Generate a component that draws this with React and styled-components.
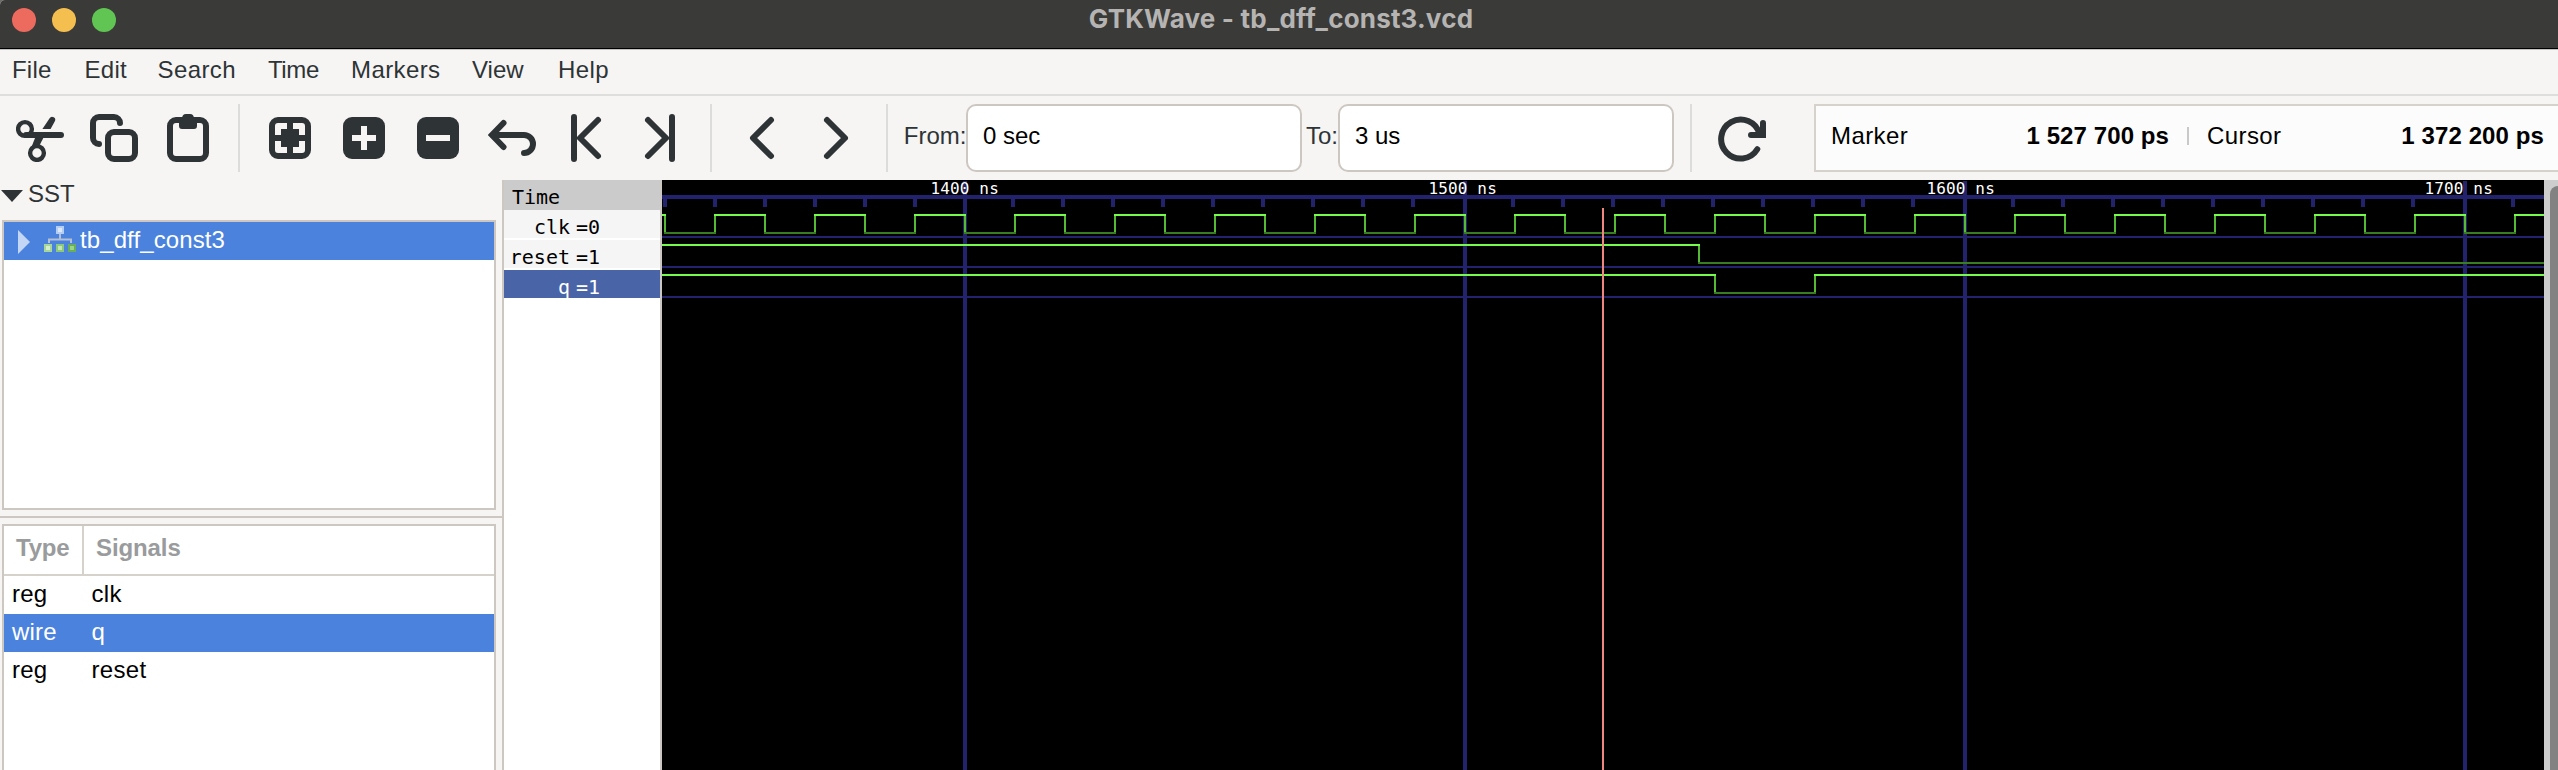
import React from "react";
import styled, { createGlobalStyle } from "styled-components";

const INK = "#2e3436";
const BG = "#f6f5f4";
const LINE = "#cdc7c2";
const SELECT = "#4a82dd";

const GlobalStyle = createGlobalStyle`
  * { box-sizing: border-box; }
  body { margin: 0; background: #6d6d6b; overflow: hidden; }
`;

const Window = styled.div`
  display: flex;
  flex-direction: column;
  width: 100%;
  height: 770px;
  overflow: hidden;
  border-top-left-radius: 5px;
  background: ${BG};
  color: ${INK};
  font: 24px/28px "Liberation Sans", Arial, sans-serif;
  white-space: pre;
`;

const TitleBar = styled.header`
  display: grid;
  grid-template-columns: 1fr auto 1fr;
  flex: none;
  height: 50px;
  padding-left: 12px;
  background: #3a3a38;
  border-bottom: 1px solid #c4c3c1;
  box-shadow: inset 0 -1px 0 #000;
`;

const Lights = styled.div`
  display: flex;
  gap: 16px;
  padding-top: 8px;
`;

const Light = styled.span`
  width: 24px;
  height: 24px;
  border-radius: 50%;
  background: ${(p) => p.$color};
`;

const Title = styled.h1`
  margin: 0;
  padding: 3px 8px 0 0;
  font: 700 26px/32px Inter, "Liberation Sans", sans-serif;
  letter-spacing: 0.18px;
  color: #b5b4b2;
`;

const MenuBar = styled.nav`
  display: flex;
  align-items: center;
  flex: none;
  height: 46px;
  padding: 0 0 4px 12px;
  border-bottom: 2px solid #dededc;
`;

const MenuItem = styled.span`
  width: ${(p) => p.$width}px;
  letter-spacing: ${(p) => p.$spacing}px;
`;

const Toolbar = styled.div`
  display: flex;
  flex: none;
  height: 84px;
  padding: 8px 0 8px 3px;
`;

const ToolButton = styled.div`
  display: flex;
  flex: none;
  width: 74px;
  padding: 10px 13px;
`;

const Divider = styled.div`
  flex: none;
  width: 2px;
  margin: 0 13px 0 ${(p) => p.$before || 13}px;
  background: #dcdcda;
`;

const FieldLabel = styled.label`
  display: flex;
  flex: none;
  align-items: center;
  width: ${(p) => p.$width}px;
  padding: 0 0 4px ${(p) => p.$indent}px;
`;

const Entry = styled.div`
  display: flex;
  flex: none;
  align-items: center;
  width: 336px;
  padding: 0 0 4px 15px;
  border: 2px solid ${LINE};
  border-radius: 10px;
  background: #fff;
  color: #000;
`;

const Readout = styled.div`
  display: flex;
  flex: 1;
  align-items: center;
  margin-left: 35px;
  padding: 0 0 4px 15px;
  border: 2px solid #d5d1cb;
  border-right: 0;
  background: #fcfcfc;
  color: #000;
`;

const ReadoutName = styled.span`
  letter-spacing: 0.4px;
`;

const ReadoutValue = styled.b`
  width: ${(p) => p.$width}px;
  text-align: right;
  letter-spacing: 0.1px;
`;

const ReadoutRule = styled.span`
  width: 2px;
  height: 18px;
  margin: 0 18px;
  background: #c9c9c9;
`;

const Body = styled.main`
  display: flex;
  flex: 1;
  min-height: 0;
`;

const SidePane = styled.aside`
  display: flex;
  flex-direction: column;
  flex: none;
  width: 504px;
  border-right: 2px solid ${LINE};
`;

const Expander = styled.div`
  display: flex;
  gap: 5px;
  height: 40px;
  padding-left: 1px;
`;

const ExpanderArrow = styled.svg`
  width: 22px;
  height: 12px;
  margin-top: 10px;
`;

const Frame = styled.section`
  display: flex;
  flex-direction: column;
  flex: ${(p) => (p.$height ? "none" : 1)};
  height: ${(p) => (p.$height ? `${p.$height}px` : "auto")};
  margin: 0 6px 0 2px;
  border: 2px solid ${LINE};
  border-bottom-width: ${(p) => (p.$height ? 2 : 0)}px;
  background: #fff;
`;

const PaneSplit = styled.div`
  height: 2px;
  margin: 6px 0;
  background: ${LINE};
`;

const TreeRow = styled.div`
  display: flex;
  align-items: center;
  height: 38px;
  padding-left: 14px;
  background: ${SELECT};
  color: #fff;
`;

const TreeArrow = styled.svg`
  width: 12px;
  height: 24px;
  margin-top: 2px;
`;

const TreeIcon = styled.svg`
  width: 32px;
  height: 26px;
  margin: 0 4px 4px 14px;
`;

const TreeName = styled.span`
  padding-bottom: 2px;
  letter-spacing: 0.1px;
`;

const TableHead = styled.div`
  display: flex;
  height: 50px;
  border-bottom: 2px solid #d5d1cb;
  color: #999b9c;
  font-weight: 700;
`;

const HeadCell = styled.div`
  display: flex;
  align-items: center;
  width: ${(p) => p.$width};
  padding: 0 0 4px 12px;
  border-right: ${(p) => (p.$rule ? "2px solid #d5d1cb" : "0")};
  letter-spacing: ${(p) => p.$spacing}px;
`;

const TableRow = styled.div`
  display: flex;
  align-items: center;
  height: 38px;
  padding: 0 0 2px 8px;
  background: ${(p) => (p.$active ? SELECT : "#fff")};
  color: ${(p) => (p.$active ? "#fff" : "#000")};
`;

const TypeCell = styled.span`
  width: 79.5px;
  letter-spacing: 0.2px;
`;

const SignalCell = styled.span`
  letter-spacing: 0.3px;
`;

const NamesPane = styled.section`
  flex: none;
  width: 158px;
  border-right: 2px solid ${LINE};
  background: #fff;
  color: #000;
  font: 20px/24px "DejaVu Sans Mono", monospace;
`;

const NamesHead = styled.div`
  height: 30px;
  padding: 5px 0 0 8px;
  background: #cbcbcb;
`;

const NameRow = styled.div`
  display: flex;
  gap: 5px;
  height: 28px;
  margin-bottom: 2px;
  padding-top: 5px;
  overflow: hidden;
  background: ${(p) => (p.$active ? "#4a64a8" : "#f5f5f5")};
  color: ${(p) => (p.$active ? "#fff" : "#000")};
`;

const SignalName = styled.span`
  width: 67px;
  padding-right: 1px;
  text-align: right;
`;

const WavePane = styled.section`
  flex: 1;
  min-width: 0;
  background: #000;
`;

const WaveCanvas = styled.svg`
  display: block;
  width: 1882px;
  height: 590px;
  shape-rendering: crispEdges;
  font: 16px "DejaVu Sans Mono", monospace;
`;

const ScrollTrack = styled.div`
  display: flex;
  flex: none;
  width: 14px;
  padding: 6px 0 0 6px;
  background: #cdcdcd;
`;

const ScrollThumb = styled.div`
  flex: 1;
  border-top-left-radius: 8px;
  background: #828282;
`;

const IconSvg = styled.svg`
  width: 48px;
  height: 48px;
  fill: none;
  stroke: ${INK};
  stroke-width: 6px;
  stroke-linecap: round;
`;

const glyphs = {
  cut: (
    <>
      <circle cx="9" cy="15" r="6.9" strokeWidth="4.4" />
      <circle cx="21" cy="39" r="6.9" strokeWidth="4.4" />
      <path d="M10 21H45" />
      <path d="M33.6 4.2a3 3 0 0 1 5.1 3.2L34.6 15H26.4Z" fill={INK} stroke="none" />
      <path d="M19.4 23H27.8L23 32.5L15.5 33Z" fill={INK} stroke="none" />
    </>
  ),
  copy: (
    <>
      <path d="M30 9a6 6 0 0 0-6-6H9a6 6 0 0 0-6 6V24a6 6 0 0 0 6 6" />
      <rect x="18" y="18" width="27" height="27" rx="6" />
    </>
  ),
  paste: (
    <>
      <rect x="6" y="6" width="36" height="39" rx="6" />
      <path
        d="M15 5H18Q18 0 22 0H26Q30 0 30 5H33V12Q33 15 30 15H18Q15 15 15 12Z"
        fill={INK}
        stroke="none"
      />
    </>
  ),
  fit: (
    <>
      <rect x="6" y="6" width="36" height="36" rx="6" />
      <path d="M24 6V42M6 24H42" />
      <rect x="15" y="15" width="18" height="18" fill={INK} stroke="none" />
    </>
  ),
  zoomIn: (
    <>
      <rect x="3" y="3" width="42" height="42" rx="9" fill={INK} stroke="none" />
      <path d="M12 21H21V12H27V21H36V27H27V36H21V27H12Z" fill={BG} stroke="none" />
    </>
  ),
  zoomOut: (
    <>
      <rect x="3" y="3" width="42" height="42" rx="9" fill={INK} stroke="none" />
      <rect x="12" y="21" width="24" height="6" fill={BG} stroke="none" />
    </>
  ),
  undo: (
    <>
      <path d="M15.5 9L4 21L15.5 33" />
      <path d="M5 21H36a9 9 0 0 1 0 18" />
    </>
  ),
  first: <path d="M12 3V45M36 6L18 24L36 42" strokeLinejoin="round" />,
  last: <path d="M36 3V45M12 6L30 24L12 42" strokeLinejoin="round" />,
  previous: <path d="M33 6L15 24L33 42" strokeLinejoin="round" />,
  next: <path d="M15 6L33 24L15 42" strokeLinejoin="round" />,
  reload: (
    <>
      <path d="M39.3 35.2A19.5 19.5 0 1 1 41.5 20" />
      <path d="M33 21H45V9" />
      <path d="M38 18L42 14V20Z" fill={INK} stroke="none" />
    </>
  ),
};

const ThinRingIcon = styled(IconSvg)`
  circle { stroke-width: 4.4px; }
`;

function Tool({ name }) {
  const Svg = name === "cut" ? ThinRingIcon : IconSvg;
  return (
    <ToolButton>
      <Svg viewBox="0 0 48 48">{glyphs[name]}</Svg>
    </ToolButton>
  );
}

const menus = [
  ["File", 72.5, 0.2],
  ["Edit", 73, 0.3],
  ["Search", 110.5, 0.4],
  ["Time", 83, -0.4],
  ["Markers", 121, 0.4],
  ["View", 86, 0],
  ["Help", 80, 0.4],
];

const signals = [
  ["reg", "clk", false],
  ["wire", "q", true],
  ["reg", "reset", false],
];

const traces = [
  ["clk", "0", false],
  ["reset", "1", false],
  ["q", "1", true],
];

/* The canvas shows 5 px per nanosecond, with 1400 ns at x = 303. */
const WIDTH = 1882;
const NAVY = "#22226f";
const xAt = (t) => 303 + (t - 1400) * 5;
const majors = [1400, 1500, 1600, 1700];
const ticks = Array.from({ length: 38 }, (_, i) => 1340 + i * 10).filter(
  (t) => t % 100 !== 0
);
const clockEdges = Array.from({ length: 38 }, (_, i) => xAt(1340 + i * 10));

function Trace({ top, start, edges }) {
  const points = [-2, ...edges, WIDTH + 2];
  let high = "";
  let low = "";
  let rise = "";
  for (let i = 0; i < points.length - 1; i += 1) {
    const isHigh = i % 2 === 0 ? start : !start;
    const y = isHigh ? top : top + 18;
    const segment = `M${points[i] - 1} ${y}H${points[i + 1] + 1}`;
    if (isHigh) high += segment;
    else low += segment;
    if (i > 0) rise += `M${points[i]} ${top + 1}V${top + 17}`;
  }
  return (
    <g fill="none" strokeWidth="2">
      <path d={low} stroke="#387d22" />
      <path d={rise} stroke="#55b936" />
      <path d={high} stroke="#75fb4c" />
    </g>
  );
}

function Waves() {
  return (
    <WaveCanvas viewBox="0 0 1882 590">
      <g fill={NAVY}>
        <rect x="0" y="15" width={WIDTH} height="4" />
        {majors.map((t) => (
          <rect key={t} x={xAt(t) - 2} y="1" width="4" height="589" />
        ))}
        {ticks.map((t) => (
          <rect key={t} x={xAt(t) - (t < 1400 ? 2 : 4)} y="19" width="4" height="8" />
        ))}
        {[56, 86, 116].map((y) => (
          <rect key={y} x="0" y={y} width={WIDTH} height="2" />
        ))}
      </g>
      <g fill="#fff">
        {majors.map((t, i) => (
          <text key={t} x={268.4 + i * 498} y="14" textLength="68.4">
            {`${t} ns`}
          </text>
        ))}
      </g>
      <Trace top={35} start edges={clockEdges} />
      <Trace top={65} start edges={[1037]} />
      <Trace top={95} start edges={[xAt(1550), xAt(1570)]} />
      <rect x="940" y="28" width="2" height="562" fill="#f08680" />
    </WaveCanvas>
  );
}

export default function App() {
  return (
    <Window>
      <GlobalStyle />
      <TitleBar>
        <Lights>
          <Light $color="#ed6a5e" />
          <Light $color="#f5bf4f" />
          <Light $color="#61c554" />
        </Lights>
        <Title>GTKWave - tb_dff_const3.vcd</Title>
      </TitleBar>
      <MenuBar>
        {menus.map(([name, width, spacing]) => (
          <MenuItem key={name} $width={width} $spacing={spacing}>
            {name}
          </MenuItem>
        ))}
      </MenuBar>
      <Toolbar>
        <Tool name="cut" />
        <Tool name="copy" />
        <Tool name="paste" />
        <Divider />
        <Tool name="fit" />
        <Tool name="zoomIn" />
        <Tool name="zoomOut" />
        <Tool name="undo" />
        <Tool name="first" />
        <Tool name="last" />
        <Divider />
        <Tool name="previous" />
        <Tool name="next" />
        <Divider />
        <FieldLabel $width={65} $indent={2.8}>From:</FieldLabel>
        <Entry>0 sec</Entry>
        <FieldLabel $width={36} $indent={4}>To:</FieldLabel>
        <Entry>3 us</Entry>
        <Divider $before={16} />
        <Tool name="reload" />
        <Readout>
          <ReadoutName>Marker</ReadoutName>
          <ReadoutValue $width={261}>1 527 700 ps</ReadoutValue>
          <ReadoutRule />
          <ReadoutName>Cursor</ReadoutName>
          <ReadoutValue $width={262.5}>1 372 200 ps</ReadoutValue>
        </Readout>
      </Toolbar>
      <Body>
        <SidePane>
          <Expander>
            <ExpanderArrow viewBox="0 0 22 12">
              <path d="M0 0H22L11 12Z" fill={INK} />
            </ExpanderArrow>
            SST
          </Expander>
          <Frame $height={290}>
            <TreeRow>
              <TreeArrow viewBox="0 0 12 24">
                <path d="M0 0L12 12L0 24Z" fill="#c3d6f5" />
              </TreeArrow>
              <TreeIcon viewBox="0 0 32 26">
                <path d="M16 8V13M5 17V13.5H27V17" fill="none" stroke="#b4bfd2" strokeWidth="2" />
                <rect x="12" y="0" width="8" height="8" fill="#b5cdf3" />
                <rect x="14" y="2" width="4" height="4" fill="#dbe7fb" />
                <rect x="0" y="18" width="8" height="8" fill="#a6d698" />
                <rect x="2" y="20" width="4" height="4" fill="#d5efcd" />
                <rect x="12" y="18" width="8" height="8" fill="#8cc97c" />
                <rect x="14" y="20" width="4" height="4" fill="#c2e6b6" />
                <rect x="24" y="18" width="8" height="8" fill="#69ae5a" />
                <rect x="26" y="20" width="4" height="4" fill="#9ad48a" />
              </TreeIcon>
              <TreeName>tb_dff_const3</TreeName>
            </TreeRow>
          </Frame>
          <PaneSplit />
          <Frame>
            <TableHead>
              <HeadCell $width="80px" $rule $spacing={-0.2}>Type</HeadCell>
              <HeadCell $width="auto" $spacing={-0.1}>Signals</HeadCell>
            </TableHead>
            {signals.map(([type, name, active]) => (
              <TableRow key={name} $active={active}>
                <TypeCell>{type}</TypeCell>
                <SignalCell>{name}</SignalCell>
              </TableRow>
            ))}
          </Frame>
        </SidePane>
        <NamesPane>
          <NamesHead>Time</NamesHead>
          {traces.map(([name, value, active]) => (
            <NameRow key={name} $active={active}>
              <SignalName>{name}</SignalName>
              <span>={value}</span>
            </NameRow>
          ))}
        </NamesPane>
        <WavePane>
          <Waves />
        </WavePane>
        <ScrollTrack>
          <ScrollThumb />
        </ScrollTrack>
      </Body>
    </Window>
  );
}
